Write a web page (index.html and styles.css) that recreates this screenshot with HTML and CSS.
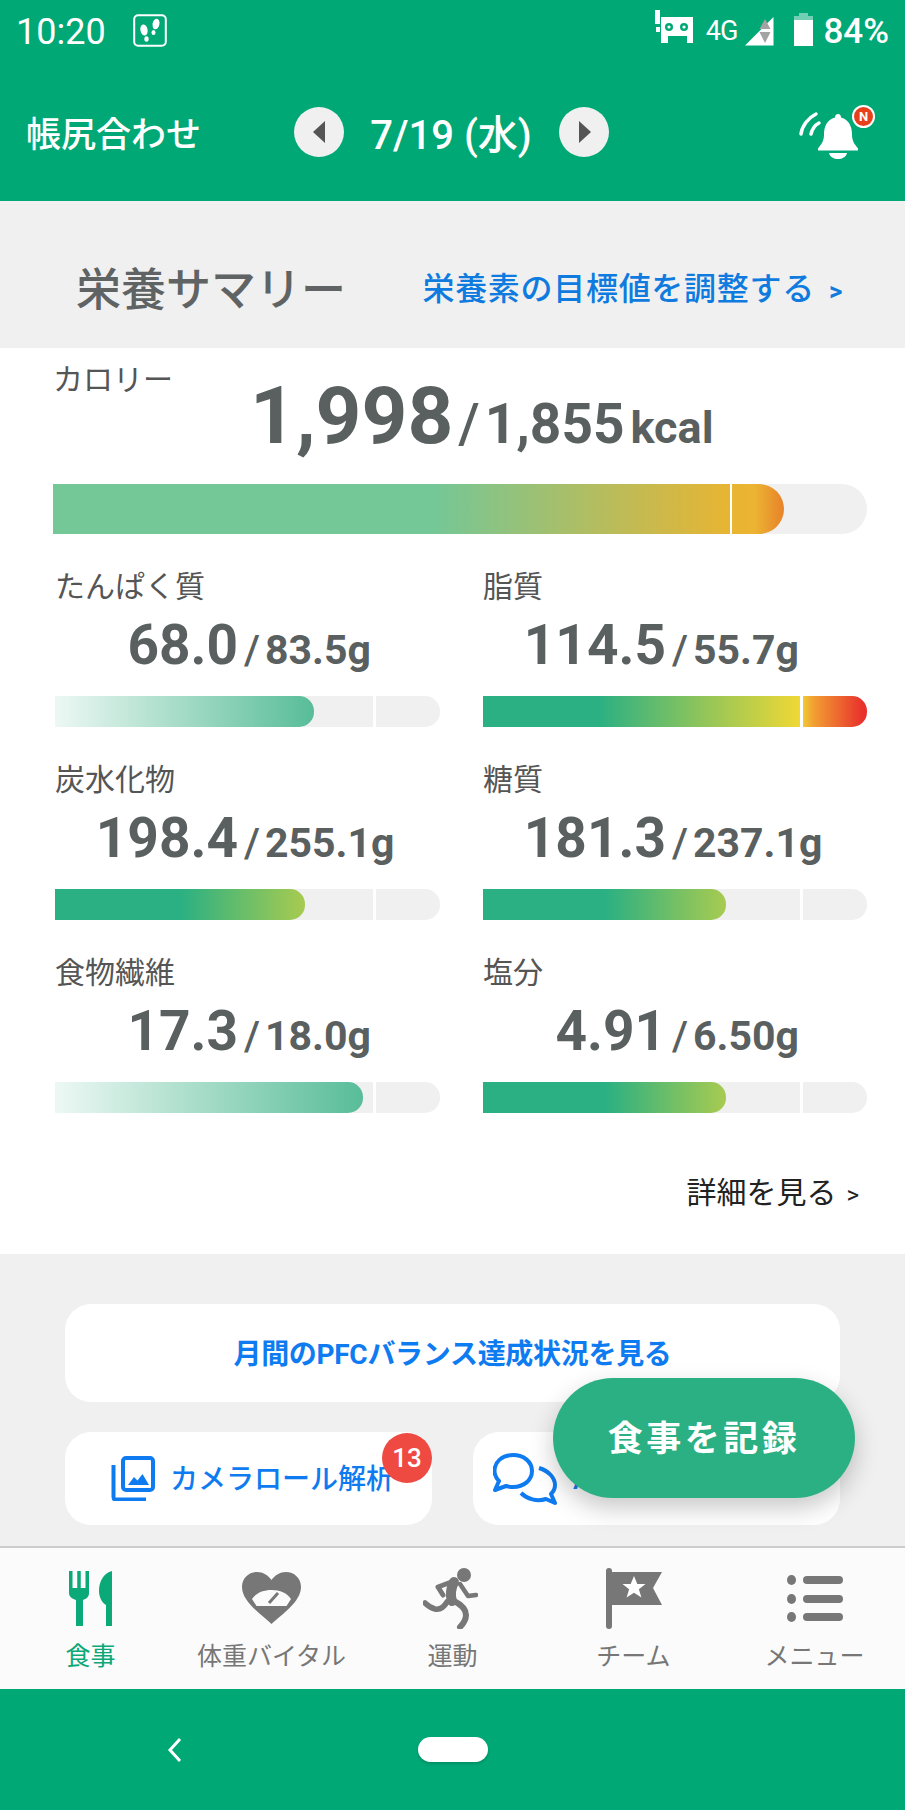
FILE: index.html
```html
<!DOCTYPE html>
<html lang="ja">
<head>
    <meta charset="UTF-8">
    <meta name="viewport" content="width=device-width, initial-scale=1.0">
    <title>栄養サマリー</title>
    <link rel="stylesheet" href="styles.css">
</head>
<body>
    <div class="app">
        <!-- Status bar -->
        <div class="statusbar">
            <div class="status-left">
                <span class="clock">10:20</span>
                <svg class="step-icon" viewBox="0 0 34 33">
                    <rect x="1.2" y="1.2" width="31.6" height="30.6" rx="4" fill="none" stroke="#fff" stroke-width="2"/>
                    <ellipse cx="11" cy="16" rx="3.6" ry="5.6" fill="#fff" transform="rotate(-12 11 16)"/>
                    <ellipse cx="13.5" cy="25" rx="2.2" ry="2.8" fill="#fff"/>
                    <ellipse cx="23" cy="10" rx="3.4" ry="5.4" fill="#fff" transform="rotate(12 23 10)"/>
                    <ellipse cx="20.5" cy="18.5" rx="2" ry="2.6" fill="#fff"/>
                </svg>
            </div>
            <div class="status-right">
                <svg class="vr-icon" viewBox="0 0 39 34">
                    <path d="M1 0h5v14H1zM2 17h4v5H2zM7 7h32v26h-6v-7H14v7H7z" fill="#fff"/>
                    <circle cx="15" cy="17" r="4" fill="#00a876"/>
                    <circle cx="30" cy="17" r="4" fill="#00a876"/>
                    <circle cx="15" cy="17" r="1.6" fill="#fff"/>
                    <circle cx="30" cy="17" r="1.6" fill="#fff"/>
                </svg>
                <span class="net">4G</span>
                <svg class="signal-icon" viewBox="0 0 29 29">
                    <path d="M0 28.500L28.500 0v28.500z" fill="#fff"/>
                    <path d="M20 2l5.500 10h-11zM14.500 15h11L20 26z" fill="#a3a3a3"/>
                </svg>
                <svg class="battery-icon" viewBox="0 0 19 33">
                    <path d="M5 0h9v3h5v5H0V3h5z" fill="#fff" opacity=".45"/>
                    <rect y="7" width="19" height="26" fill="#fff"/>
                </svg>
                <span class="battery-text">84%</span>
            </div>
        </div>

        <!-- App bar -->
        <header class="appbar">
            <div class="appbar-title">帳尻合わせ</div>
            <div class="date-nav">
                <span class="date-btn"><i class="arrow-left"></i></span>
                <span class="date-text">7/19 (水)</span>
                <span class="date-btn"><i class="arrow-right"></i></span>
            </div>
            <div class="bell">
                <svg viewBox="0 0 80 60" width="80" height="60">
                    <path d="M42 12c2 0 3 1.500 3 3.500 8 2 11 9 11 17 0 7 3 10 6 14v2H22v-2c3-4 6-7 6-14 0-8 3-15 11-17 0-2 1-3.500 3-3.500z" fill="#fff"/>
                    <path d="M33 51h18c-1 4-5 6-9 6s-8-2-9-6z" fill="#fff"/>
                    <path d="M5 32c1-8 7-16 15-20M15 32c1-4 4-9 8-11" fill="none" stroke="#fff" stroke-width="3.500" stroke-linecap="round"/>
                </svg>
                <span class="bell-badge">N</span>
            </div>
        </header>

        <!-- Summary heading -->
        <div class="summary-head">
            <h2>栄養サマリー</h2>
            <a class="goal-link">栄養素の目標値を調整する<span class="goal-arrow">&gt;</span></a>
        </div>

        <!-- Nutrients -->
        <section class="summary">
            <div class="calorie">
                <div class="stat-label">カロリー</div>
                <div class="calorie-value">
                    <span class="calorie-now">1,998</span>
                    <span class="calorie-goal"><span class="slash">/</span>1,855</span>
                    <span class="calorie-unit">kcal</span>
                </div>
                <div class="track track-large">
                    <div class="fill fill-calorie"></div>
                    <i class="mark mark-calorie"></i>
                </div>
            </div>

            <div class="stats">
                <div class="stat">
                    <div class="stat-label">たんぱく質</div>
                    <div class="stat-value"><span class="now">68.0</span><span class="goal"><span class="slash">/</span>83.5g</span></div>
                    <div class="track"><div class="fill fill-pale" style="width: 67.3%"></div><i class="mark"></i></div>
                </div>
                <div class="stat">
                    <div class="stat-label">脂質</div>
                    <div class="stat-value"><span class="now">114.5</span><span class="goal"><span class="slash">/</span>55.7g</span></div>
                    <div class="track"><div class="fill fill-over" style="width: 100%"></div><i class="mark"></i></div>
                </div>
                <div class="stat">
                    <div class="stat-label">炭水化物</div>
                    <div class="stat-value"><span class="now">198.4</span><span class="goal"><span class="slash">/</span>255.1g</span></div>
                    <div class="track"><div class="fill fill-lime" style="width: 65%"></div><i class="mark"></i></div>
                </div>
                <div class="stat">
                    <div class="stat-label">糖質</div>
                    <div class="stat-value"><span class="now">181.3</span><span class="goal"><span class="slash">/</span>237.1g</span></div>
                    <div class="track"><div class="fill fill-lime" style="width: 63.300%"></div><i class="mark"></i></div>
                </div>
                <div class="stat">
                    <div class="stat-label">食物繊維</div>
                    <div class="stat-value"><span class="now">17.3</span><span class="goal"><span class="slash">/</span>18.0g</span></div>
                    <div class="track"><div class="fill fill-pale" style="width: 80%"></div><i class="mark"></i></div>
                </div>
                <div class="stat">
                    <div class="stat-label">塩分</div>
                    <div class="stat-value"><span class="now">4.91</span><span class="goal"><span class="slash">/</span>6.50g</span></div>
                    <div class="track"><div class="fill fill-lime" style="width: 63.300%"></div><i class="mark"></i></div>
                </div>
            </div>

            <a class="detail-link">詳細を見る<span class="detail-arrow">&gt;</span></a>
        </section>

        <!-- Shortcuts -->
        <section class="shortcuts">
            <a class="card card-wide"><span class="card-text">月間のPFCバランス達成状況を見る</span></a>
            <div class="card-row">
                <a class="card">
                    <svg class="card-icon" viewBox="0 0 44 45">
                        <rect x="12" y="2" width="30" height="32" rx="3" fill="none" stroke="#0f7bf0" stroke-width="4"/>
                        <path d="M2.500 9v32c0 1.500 1 2.500 2.500 2.500h30" fill="none" stroke="#0f7bf0" stroke-width="4"/>
                        <path d="M17 29l6-8 3.500 3.500 5-6.500 6.500 11z" fill="#0f7bf0"/>
                    </svg>
                    <span class="card-text">カメラロール解析</span>
                    <span class="count-badge">13</span>
                </a>
                <a class="card">
                    <svg class="card-icon chat-icon" viewBox="0 0 65 52">
                        <path d="M20 2c11 0 19 7 19 16s-8 16-19 16c-3 0-5-.5-7-1L2 37l4-9c-3-3-4.500-6-4.500-10C1.500 9 9 2 20 2z" fill="none" stroke="#0f7bf0" stroke-width="4" stroke-linejoin="round"/>
                        <path d="M46 15c10 3 16 10 16 17 0 4-2 7-4 9l4 9-9-4c-9 3-19 0-25-6" fill="none" stroke="#0f7bf0" stroke-width="4" stroke-linejoin="round"/>
                    </svg>
                    <span class="card-text">AIチャット</span>
                </a>
            </div>
            <button class="fab">食事を記録</button>
        </section>

        <!-- Tab bar -->
        <nav class="tabs">
            <div class="tab tab-active">
                <svg width="44" height="55" viewBox="0 0 44 55">
                    <path d="M0 0h3.500v17h4.750V0h3.500v17h4.750V0H20v22c0 4-3 6-6 7v26H7V29c-3-1-7-3-7-7zM43 0c-8 2-13 10-13 20 0 6 3 12 7 14v21h6z" fill="#0ba878"/>
                </svg>
                <span>食事</span>
            </div>
            <div class="tab">
                <svg width="59" height="52" viewBox="0 0 59 52">
                    <path d="M29.500 52C20 43 0 30 0 15 0 6 7 0 15 0c6 0 11 3 14.500 8C33 3 38 0 44 0c8 0 15 6 15 15 0 15-20 28-29.500 37z" fill="#777"/>
                    <path d="M10 27c4-6 11-9 19.500-9S45 21 49 27l-4.500 7h-30z" fill="#fbfbfb"/>
                    <path d="M27 31l9-10" stroke="#777" stroke-width="3"/>
                </svg>
                <span>体重バイタル</span>
            </div>
            <div class="tab">
                <svg class="runner-icon" width="55" height="61" viewBox="0 0 55 61">
                    <circle cx="41" cy="7" r="7" fill="#777"/>
                    <path d="M31 13L15 19l5 8" fill="none" stroke="#777" stroke-width="5" stroke-linecap="round" stroke-linejoin="round"/>
                    <path d="M31 14c-3 6-4 13-2 19" fill="none" stroke="#777" stroke-width="10" stroke-linecap="round"/>
                    <path d="M37 16l8 12 8-1" fill="none" stroke="#777" stroke-width="4.500" stroke-linecap="round" stroke-linejoin="round"/>
                    <path d="M24 34c-3 5-7 8-12 7-4-1-7-3-10-6" fill="none" stroke="#777" stroke-width="5.500" stroke-linecap="round"/>
                    <path d="M31 33c6 3 12 7 12 14 0 5-3 9-6 12" fill="none" stroke="#777" stroke-width="6" stroke-linecap="round"/>
                </svg>
                <span>運動</span>
            </div>
            <div class="tab">
                <svg width="56" height="61" viewBox="0 0 56 61">
                    <rect width="6" height="61" rx="3" fill="#777"/>
                    <path d="M5 4h51l-9 16 9 17H5z" fill="#777"/>
                    <path d="M28 8l3.300 8h8.200l-6.600 5.200 2.500 8.300L28 24.700l-7.400 4.800 2.500-8.300-6.600-5.200h8.200z" fill="#fff"/>
                </svg>
                <span>チーム</span>
            </div>
            <div class="tab">
                <svg width="56" height="47" viewBox="0 0 56 47">
                    <ellipse cx="4.500" cy="5" rx="4.500" ry="5" fill="#777"/>
                    <ellipse cx="4.500" cy="24" rx="4.500" ry="5" fill="#777"/>
                    <ellipse cx="4.500" cy="42" rx="4.500" ry="5" fill="#777"/>
                    <rect x="16" y="1" width="40" height="8" rx="4" fill="#777"/>
                    <rect x="16" y="20" width="40" height="8" rx="4" fill="#777"/>
                    <rect x="16" y="38" width="40" height="8" rx="4" fill="#777"/>
                </svg>
                <span>メニュー</span>
            </div>
        </nav>

        <!-- Android navigation -->
        <div class="navbar">
            <div class="nav-slot">
                <svg width="16" height="26" viewBox="0 0 16 26"><path d="M13 2L3 13l10 11" fill="none" stroke="#fff" stroke-width="3"/></svg>
            </div>
            <div class="nav-slot"><span class="home-pill"></span></div>
            <div class="nav-slot"></div>
        </div>
    </div>
</body>
</html>
```

FILE: styles.css
```css
* { box-sizing: border-box; }
body { margin: 0; font-family: Roboto, "Noto Sans CJK JP", sans-serif; background: #f0f0f0; color: #5a5f5f; }
a { display: block; }
.app { position: relative; width: 905px; height: 1810px; display: flex; flex-direction: column; overflow: hidden; }

.statusbar { height: 62px; background: #00a876; color: #fff; display: flex; justify-content: space-between; padding: 10px 16px 0 16px; }
.status-left, .status-right { display: flex; align-items: flex-start; }
.clock { font-size: 36px; line-height: 44px; }
.step-icon { width: 34px; height: 33px; margin: 4px 0 0 27px; }
.vr-icon { width: 39px; height: 34px; margin-right: 13px; }
.net { font-size: 27px; line-height: 42px; margin-right: 8px; letter-spacing: -1px; }
.signal-icon { width: 29px; height: 29px; margin: 7px 20px 0 0; }
.battery-icon { width: 19px; height: 33px; margin: 3px 10px 0 0; }
.battery-text { font-size: 35px; line-height: 44px; font-weight: 500; }

.appbar { height: 139px; background: #00a876; color: #fff; display: grid; grid-template-columns: 1fr auto 1fr; align-items: center; padding: 0 29px 0 26px; }
.appbar-title { font-size: 35px; font-weight: 500; }
.date-nav { display: flex; align-items: center; }
.date-btn { width: 50px; height: 50px; border-radius: 50%; background: #f0f0f0; display: flex; align-items: center; justify-content: center; }
.arrow-left { border: 9px solid transparent; border-left: 0; border-right: 12px solid #555; border-top-width: 11px; border-bottom-width: 11px; }
.arrow-right { border: 9px solid transparent; border-right: 0; border-left: 12px solid #555; border-top-width: 11px; border-bottom-width: 11px; margin-left: 3px; }
.date-text { width: 215px; text-align: center; font-size: 40px; font-weight: 500; }
.bell { position: relative; justify-self: end; width: 80px; height: 60px; }
.bell-badge { position: absolute; left: 56px; top: 3px; width: 23px; height: 23px; border-radius: 50%; background: #e8401c; border: 2px solid #fff; color: #fff; font-size: 13px; line-height: 19px; font-weight: 700; text-align: center; }

.summary-head { height: 147px; background: #f0f0f0; display: flex; align-items: center; justify-content: space-between; padding: 23px 62px 0 76px; }
.summary-head h2 { margin: 0; font-size: 45px; font-weight: 500; color: #5f6363; }
.goal-link { font-size: 32px; font-weight: 500; letter-spacing: .7px; color: #0f7bdf; }
.goal-arrow { font-size: 26px; font-weight: 700; margin-left: 14px; }

.summary { height: 906px; background: #fff; padding: 10px 38px 0 53px; }
.stat-label { font-size: 30px; line-height: 40px; color: #555; }
.calorie .stat-label { padding-top: 2px; height: 40px; }
.calorie-value { display: flex; align-items: baseline; margin-top: -27px; padding-left: 197px; height: 90px; line-height: 90px; font-weight: 700; }
.calorie-now { font-size: 80px; }
.calorie-goal { font-size: 55px; margin-left: 5px; }
.calorie-unit { font-size: 45px; margin-left: 6px; font-weight: 700; }
.slash { font-weight: 500; margin-right: 5px; }
.track { position: relative; height: 31px; background: #f0f0f0; border-radius: 0 15px 15px 0; }
.track-large { height: 50px; margin-top: 23px; border-radius: 0 25px 25px 0; }
.fill { height: 100%; border-radius: 0 15px 15px 0; }
.fill-calorie { width: 731px; border-radius: 0 25px 25px 0; background: linear-gradient(90deg, #74c797 0%, #74c797 52%, #e6b534 92%, #ecb432 96%, #e8822a 100%); }
.fill-pale { background: linear-gradient(90deg, #edf8f4 0%, #58bd98 100%); }
.fill-over { background: linear-gradient(90deg, #2ab083 0%, #2ab083 30%, #efd835 82.5%, #f2a032 86%, #e8302c 99%); }
.fill-lime { background: linear-gradient(90deg, #2ab083 0%, #2ab083 50%, #a8cb50 100%); }
.mark { position: absolute; top: 0; bottom: 0; left: 82.6%; width: 3px; background: #fff; }
.mark-calorie { left: 677px; width: 2px; }

.stats { display: grid; grid-template-columns: 385px 384px; column-gap: 43px; row-gap: 33px; margin: 33px 0 0 2px; }
.stat-value { display: flex; align-items: baseline; height: 64px; line-height: 64px; margin: 6px 0 19px; font-weight: 700; }
.now { width: 183px; text-align: right; font-size: 55px; }
.goal { font-size: 41px; font-weight: 700; margin-left: 6px; }
.detail-link { margin-top: 60px; text-align: right; font-size: 30px; line-height: 40px; color: #222; padding-right: 8px; }
.detail-arrow { font-size: 24px; margin-left: 10px; }

.shortcuts { position: relative; height: 292px; background: #f0f0f0; padding: 50px 65px 0; }
.card { position: relative; display: flex; align-items: center; justify-content: center; height: 93px; background: #fff; border-radius: 26px; color: #0f7bf0; font-size: 28px; font-weight: 500; }
.card-text { padding-bottom: 3px; }
.card-wide { height: 98px; font-size: 28px; letter-spacing: -.3px; font-weight: 700; }
.card-row { display: grid; grid-template-columns: 367px 367px; column-gap: 41px; margin-top: 30px; }
.card-row .card { justify-content: flex-start; padding-left: 46px; }
.card-icon { width: 44px; height: 45px; margin-right: 15px; flex: none; }
.chat-icon { width: 65px; height: 52px; margin: 0 15px 0 -26px; }
.count-badge { position: absolute; left: 317px; top: 1px; width: 50px; height: 50px; border-radius: 50%; background: #ef4a42; color: #fff; font-size: 26px; line-height: 50px; text-align: center; }
.fab { position: absolute; left: 553px; top: 124px; width: 302px; height: 120px; border: 0; padding: 0 0 6px; border-radius: 60px; background: #2bb083; color: #fff; font-family: inherit; font-size: 35px; font-weight: 700; letter-spacing: 3.5px; box-shadow: 0 10px 24px rgba(0, 0, 0, .22); }

.tabs { height: 143px; background: #fbfbfb; border-top: 2px solid #ccc; display: grid; grid-template-columns: repeat(5, 181px); }
.tab { display: grid; grid-template-rows: 62px auto; justify-items: center; align-items: center; padding-top: 19px; color: #777; font-size: 25px; line-height: 34px; }
.tab span { margin-top: -4px; }
.tab-active { color: #0ba878; }
.runner-icon { margin-right: 4px; }

.navbar { height: 121px; background: #00a876; display: flex; justify-content: center; align-items: center; }
.nav-slot { width: 278px; display: flex; justify-content: center; }
.home-pill { width: 70px; height: 25px; border-radius: 13px; background: #fff; box-shadow: 0 2px 3px rgba(0, 0, 0, .15); }
```
